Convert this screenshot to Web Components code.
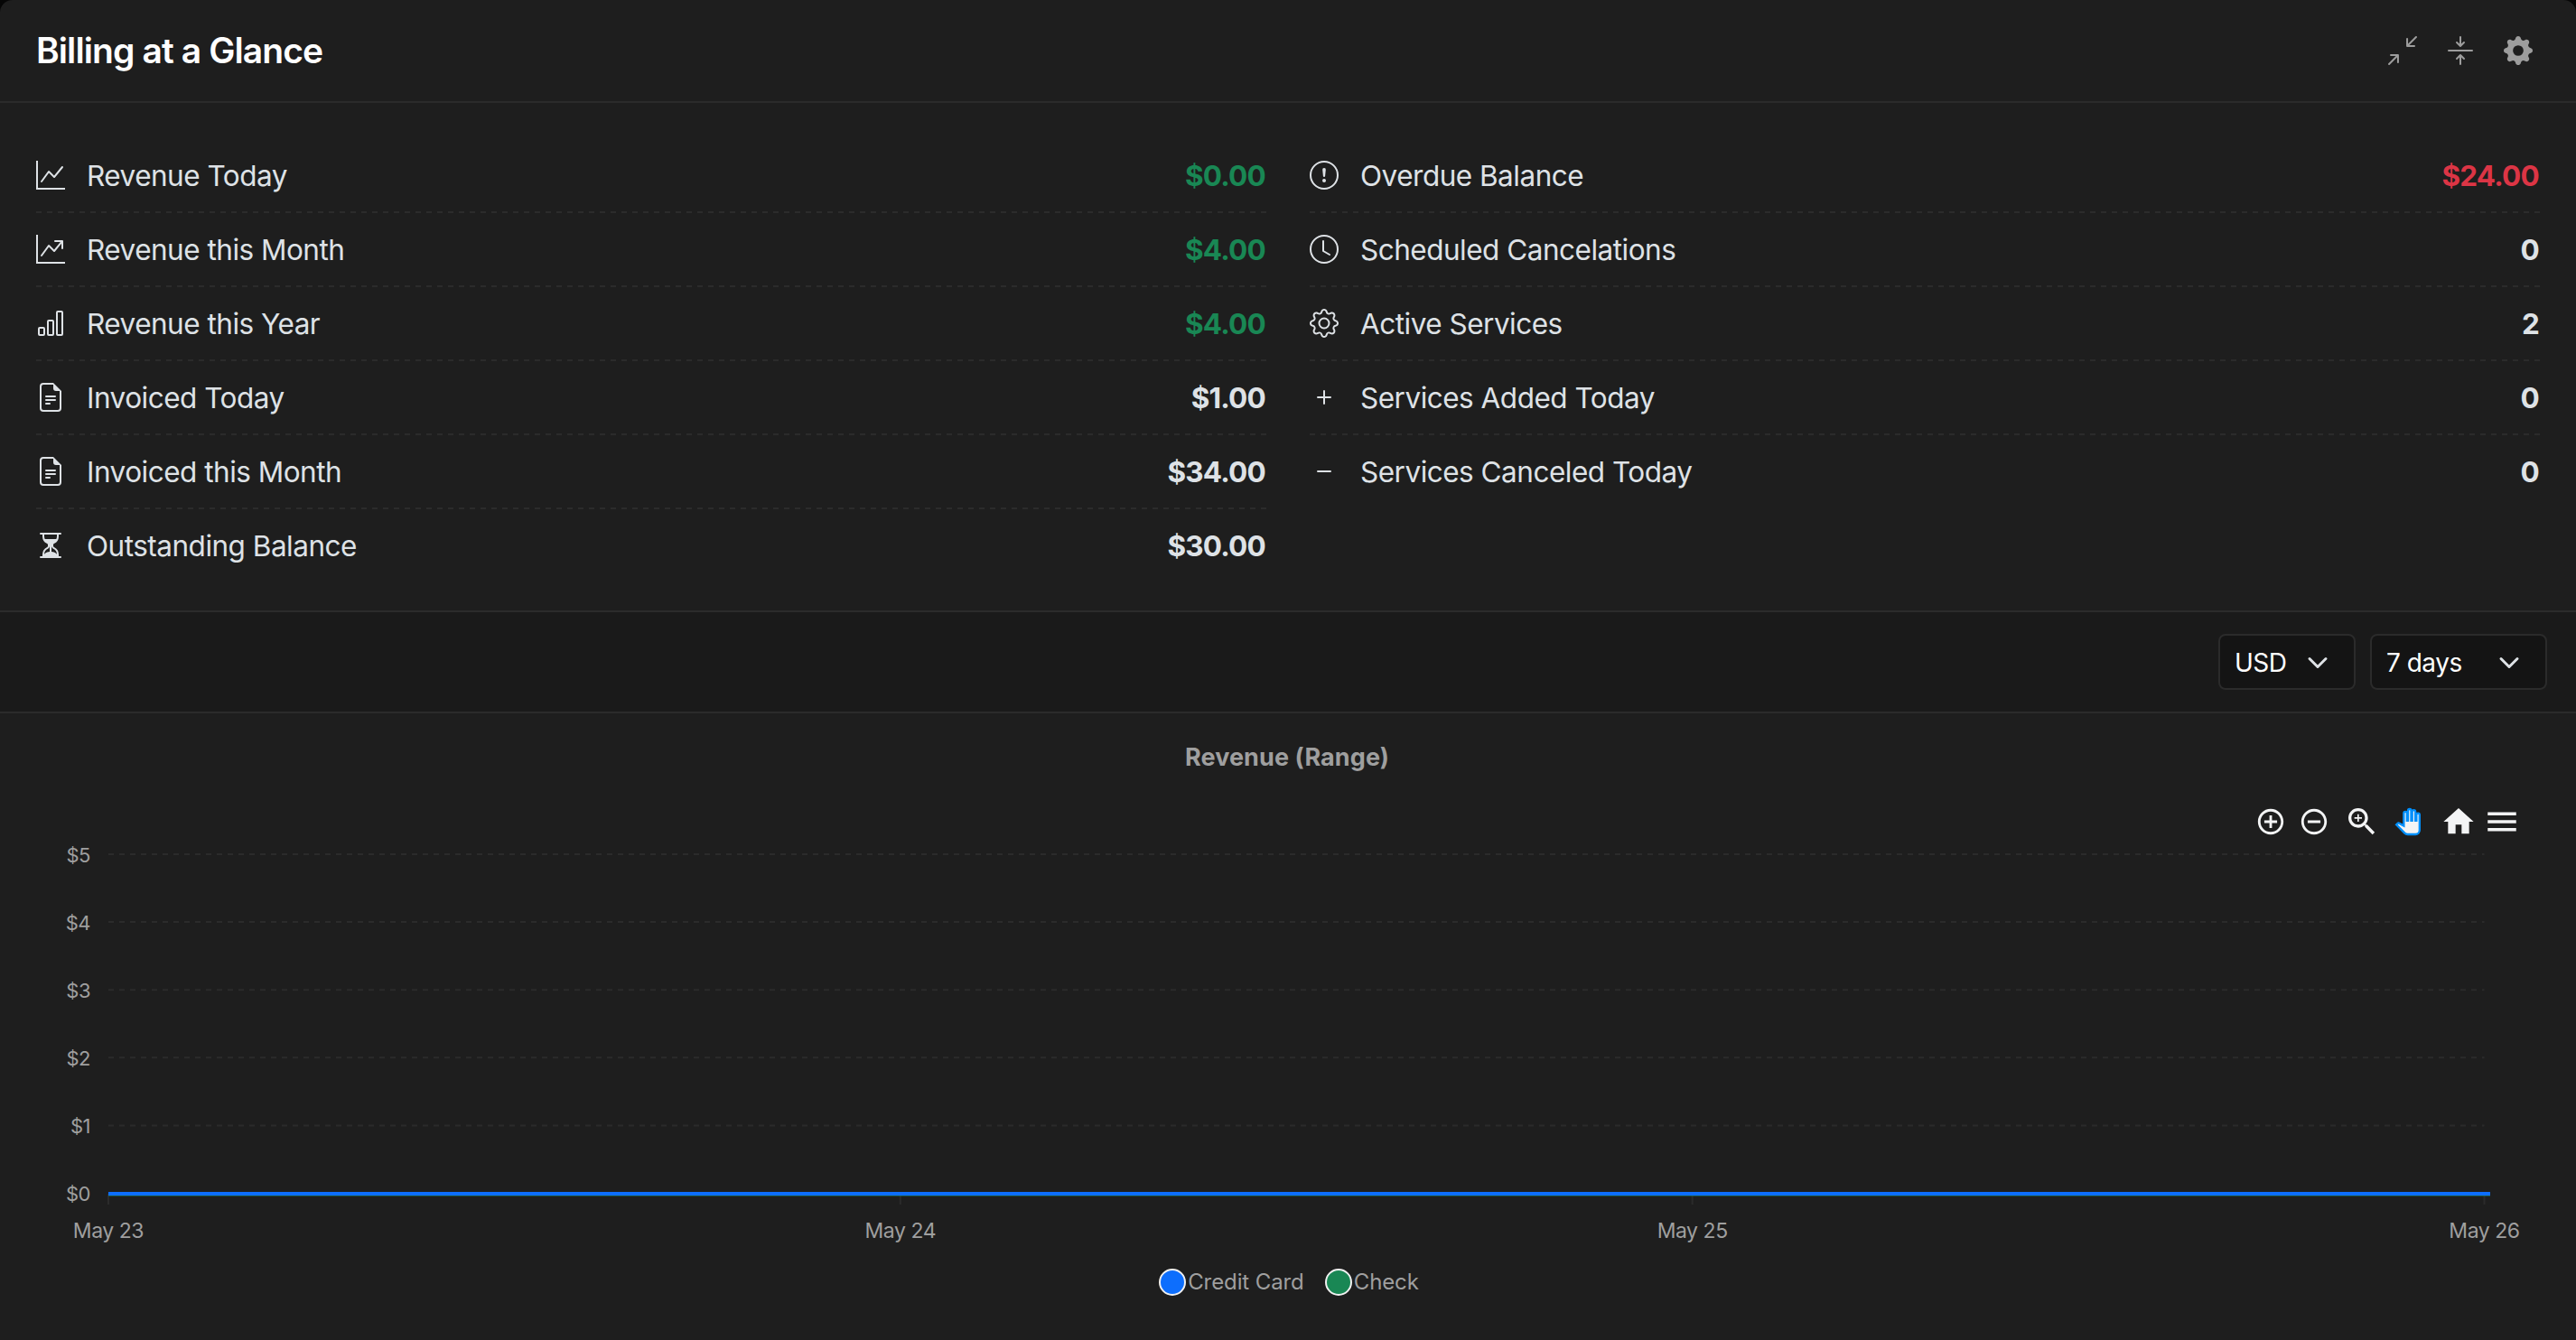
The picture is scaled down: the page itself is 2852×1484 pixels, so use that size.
<!DOCTYPE html>
<html lang="en">
<head>
<meta charset="utf-8">
<title>Billing at a Glance</title>
<style>
  html, body {
    margin: 0;
    background: #060606;
  }
  body {
    font-family: Inter, "Liberation Sans", sans-serif;
    color: #dee2e6;
    width: 2852px;
    height: 1484px;
    overflow: hidden;
  }
</style>
</head>
<body>
<billing-card>
  <card-header slot="header" heading="Billing at a Glance"></card-header>
  <stat-grid slot="stats">
    <stat-list slot="left">
      <stat-row icon="graph-up" tone="success" value="$0.00">Revenue Today</stat-row>
      <stat-row icon="graph-up-arrow" tone="success" value="$4.00">Revenue this Month</stat-row>
      <stat-row icon="bar-chart" tone="success" value="$4.00">Revenue this Year</stat-row>
      <stat-row icon="file-text" value="$1.00">Invoiced Today</stat-row>
      <stat-row icon="file-text" value="$34.00">Invoiced this Month</stat-row>
      <stat-row icon="hourglass" value="$30.00">Outstanding Balance</stat-row>
    </stat-list>
    <stat-list slot="right">
      <stat-row icon="exclamation" tone="danger" value="$24.00">Overdue Balance</stat-row>
      <stat-row icon="clock" value="0">Scheduled Cancelations</stat-row>
      <stat-row icon="gear" value="2">Active Services</stat-row>
      <stat-row icon="plus" value="0">Services Added Today</stat-row>
      <stat-row icon="minus" value="0">Services Canceled Today</stat-row>
    </stat-list>
  </stat-grid>
  <filter-bar slot="filters">
    <select-box style="width: 152px">USD</select-box>
    <select-box style="width: 196px">7 days</select-box>
  </filter-bar>
  <revenue-chart slot="chart" heading="Revenue (Range)"></revenue-chart>
</billing-card>

<script>
const ICONS = {
  'graph-up': '<path fill-rule="evenodd" d="M0 0h1v15h15v1H0zm14.817 3.113a.5.5 0 0 1 .07.704l-4.5 5.5a.5.5 0 0 1-.74.037L7.06 6.767l-3.656 5.027a.5.5 0 0 1-.808-.588l4-5.5a.5.5 0 0 1 .758-.06l2.609 2.61 4.15-5.073a.5.5 0 0 1 .704-.07"/>',
  'graph-up-arrow': '<path fill-rule="evenodd" d="M0 0h1v15h15v1H0zm10 3.5a.5.5 0 0 1 .5-.5h4a.5.5 0 0 1 .5.5v4a.5.5 0 0 1-1 0V4.9l-3.613 4.417a.5.5 0 0 1-.74.037L7.06 6.767l-3.656 5.027a.5.5 0 0 1-.808-.588l4-5.5a.5.5 0 0 1 .758-.06l2.609 2.61L13.445 4H10.5a.5.5 0 0 1-.5-.5"/>',
  'bar-chart': '<path d="M11 2a1 1 0 0 1 1-1h2a1 1 0 0 1 1 1v12a1 1 0 0 1-1 1h-2a1 1 0 0 1-1-1zm1 0v12h2V2zM6 7a1 1 0 0 1 1-1h2a1 1 0 0 1 1 1v7a1 1 0 0 1-1 1H7a1 1 0 0 1-1-1zm1 0v7h2V7zM1 11a1 1 0 0 1 1-1h2a1 1 0 0 1 1 1v3a1 1 0 0 1-1 1H2a1 1 0 0 1-1-1zm1 0v3h2v-3z" fill-rule="evenodd"/>',
  'file-text': '<path d="M5.5 7a.5.5 0 0 0 0 1h5a.5.5 0 0 0 0-1zM5 9.500a.5.5 0 0 1 .5-.5h5a.5.5 0 0 1 0 1h-5a.5.5 0 0 1-.5-.5m0 2a.5.5 0 0 1 .5-.5h2a.5.5 0 0 1 0 1h-2a.5.5 0 0 1-.5-.5"/><path d="M9.500 0H4a2 2 0 0 0-2 2v12a2 2 0 0 0 2 2h8a2 2 0 0 0 2-2V4.500zm0 1v2A1.500 1.500 0 0 0 11 4.500h2V14a1 1 0 0 1-1 1H4a1 1 0 0 1-1-1V2a1 1 0 0 1 1-1z"/>',
  'hourglass': '<path d="M2.500 15a.5.5 0 1 1 0-1h1v-1a4.500 4.500 0 0 1 2.557-4.060c.29-.139.443-.377.443-.59v-.7c0-.213-.154-.451-.443-.59A4.500 4.500 0 0 1 3.500 3V2h-1a.5.5 0 0 1 0-1h11a.5.5 0 0 1 0 1h-1v1a4.500 4.500 0 0 1-2.557 4.060c-.29.139-.443.377-.443.59v.7c0 .213.154.451.443.59A4.500 4.500 0 0 1 12.500 13v1h1a.5.5 0 0 1 0 1zm2-13v1c0 .537.120 1.045.337 1.500h6.326c.216-.455.337-.963.337-1.500V2zm3 6.350c0 .701-.478 1.236-1.011 1.492A3.500 3.500 0 0 0 4.500 13s.866-1.299 3-1.480zm1 0v3.170c2.134.181 3 1.480 3 1.480a3.500 3.500 0 0 0-1.989-3.158C8.978 9.586 8.500 9.052 8.500 8.351z"/>',
  'exclamation': '<path d="M8 15A7 7 0 1 1 8 1a7 7 0 0 1 0 14m0 1A8 8 0 1 0 8 0a8 8 0 0 0 0 16"/><path d="M7.002 11a1 1 0 1 1 2 0 1 1 0 0 1-2 0M7.100 4.995a.905.905 0 1 1 1.800 0l-.35 3.507a.552.552 0 0 1-1.100 0z"/>',
  'clock': '<path d="M8 3.500a.5.5 0 0 0-1 0V9a.5.5 0 0 0 .252.434l3.500 2a.5.5 0 0 0 .496-.868L8 8.710z"/><path d="M8 16A8 8 0 1 0 8 0a8 8 0 0 0 0 16m7-8A7 7 0 1 1 1 8a7 7 0 0 1 14 0"/>',
  'gear': '<path d="M8 4.754a3.246 3.246 0 1 0 0 6.492 3.246 3.246 0 0 0 0-6.492M5.754 8a2.246 2.246 0 1 1 4.492 0 2.246 2.246 0 0 1-4.492 0"/><path d="M9.796 1.343c-.527-1.790-3.065-1.790-3.592 0l-.094.319a.873.873 0 0 1-1.255.520l-.292-.160c-1.640-.892-3.433.902-2.540 2.541l.159.292a.873.873 0 0 1-.520 1.255l-.319.094c-1.790.527-1.790 3.065 0 3.592l.319.094a.873.873 0 0 1 .520 1.255l-.160.292c-.892 1.640.901 3.434 2.541 2.540l.292-.159a.873.873 0 0 1 1.255.520l.094.319c.527 1.790 3.065 1.790 3.592 0l.094-.319a.873.873 0 0 1 1.255-.520l.292.160c1.640.893 3.434-.902 2.540-2.541l-.159-.292a.873.873 0 0 1 .520-1.255l.319-.094c1.790-.527 1.790-3.065 0-3.592l-.319-.094a.873.873 0 0 1-.520-1.255l.160-.292c.893-1.640-.902-3.433-2.541-2.540l-.292.159a.873.873 0 0 1-1.255-.520zm-2.633.283c.246-.835 1.428-.835 1.674 0l.094.319a1.873 1.873 0 0 0 2.693 1.115l.291-.160c.764-.415 1.600.420 1.184 1.185l-.159.292a1.873 1.873 0 0 0 1.116 2.692l.318.094c.835.246.835 1.428 0 1.674l-.319.094a1.873 1.873 0 0 0-1.115 2.693l.160.291c.415.764-.420 1.600-1.185 1.184l-.291-.159a1.873 1.873 0 0 0-2.693 1.116l-.094.318c-.246.835-1.428.835-1.674 0l-.094-.319a1.873 1.873 0 0 0-2.692-1.115l-.292.160c-.764.415-1.600-.420-1.184-1.185l.159-.291A1.873 1.873 0 0 0 1.945 8.930l-.319-.094c-.835-.246-.835-1.428 0-1.674l.319-.094A1.873 1.873 0 0 0 3.060 4.377l-.160-.292c-.415-.764.420-1.600 1.185-1.184l.292.159a1.873 1.873 0 0 0 2.692-1.115z"/>',
  'plus': '<path d="M8 4a.5.5 0 0 1 .5.5v3h3a.5.5 0 0 1 0 1h-3v3a.5.5 0 0 1-1 0v-3h-3a.5.5 0 0 1 0-1h3v-3A.5.5 0 0 1 8 4"/>',
  'minus': '<path d="M4 8a.5.5 0 0 1 .5-.5h7a.5.5 0 0 1 0 1h-7A.5.5 0 0 1 4 8"/>',
  'contract': '<path fill-rule="evenodd" d="M.172 15.828a.5.5 0 0 0 .707 0l4.096-4.096V14.500a.5.5 0 1 0 1 0v-3.975a.5.5 0 0 0-.5-.5H1.500a.5.5 0 0 0 0 1h2.768L.172 15.121a.5.5 0 0 0 0 .707M15.828.172a.5.5 0 0 0-.707 0l-4.096 4.096V1.500a.5.5 0 1 0-1 0v3.975a.5.5 0 0 0 .5.5H14.500a.5.5 0 0 0 0-1h-2.768L15.828.879a.5.5 0 0 0 0-.707"/>',
  'collapse': '<path fill-rule="evenodd" d="M1 8a.5.5 0 0 1 .5-.5h13a.5.5 0 0 1 0 1h-13A.5.5 0 0 1 1 8m7-8a.5.5 0 0 1 .5.5v3.793l1.146-1.147a.5.5 0 0 1 .708.708l-2 2a.5.5 0 0 1-.708 0l-2-2a.5.5 0 1 1 .708-.708L7.500 4.293V.5A.5.5 0 0 1 8 0m-.5 11.707-1.146 1.147a.5.5 0 0 1-.708-.708l2-2a.5.5 0 0 1 .708 0l2 2a.5.5 0 0 1-.708.708L8.500 11.707V15.500a.5.5 0 0 1-1 0z"/>',
  'gear-fill': '<path d="M9.405 1.050c-.413-1.400-2.397-1.400-2.810 0l-.1.340a1.464 1.464 0 0 1-2.105.872l-.310-.170c-1.283-.698-2.686.705-1.987 1.987l.169.311c.446.820.023 1.841-.872 2.105l-.340.100c-1.400.413-1.400 2.397 0 2.810l.340.100a1.464 1.464 0 0 1 .872 2.105l-.170.310c-.698 1.283.705 2.686 1.987 1.987l.311-.169a1.464 1.464 0 0 1 2.105.872l.100.340c.413 1.400 2.397 1.400 2.810 0l.100-.340a1.464 1.464 0 0 1 2.105-.872l.310.170c1.283.698 2.686-.705 1.987-1.987l-.169-.311a1.464 1.464 0 0 1 .872-2.105l.340-.100c1.400-.413 1.400-2.397 0-2.810l-.340-.100a1.464 1.464 0 0 1-.872-2.105l.170-.310c.698-1.283-.705-2.686-1.987-1.987l-.311.169a1.464 1.464 0 0 1-2.105-.872zM8 10.930a2.929 2.929 0 1 1 0-5.860 2.929 2.929 0 0 1 0 5.858z"/>'
};

function icon(name) {
  return `<svg width="32" height="32" viewBox="0 0 16 16" fill="currentColor">${ICONS[name]}</svg>`;
}

class BillingCard extends HTMLElement {
  constructor() {
    super();
    this.attachShadow({ mode: 'open' });
    this.shadowRoot.innerHTML = `
      <style>
        :host {
          display: flex;
          flex-direction: column;
          box-sizing: border-box;
          height: 1484px;
          background: #1e1e1e;
          border-radius: 14px 14px 0 0;
          overflow: hidden;
        }
      </style>
      <slot name="header"></slot>
      <slot name="stats"></slot>
      <slot name="filters"></slot>
      <slot name="chart"></slot>
    `;
  }
}

class CardHeader extends HTMLElement {
  constructor() {
    super();
    this.attachShadow({ mode: 'open' });
    this.shadowRoot.innerHTML = `
      <style>
        :host {
          display: flex;
          align-items: center;
          justify-content: space-between;
          box-sizing: border-box;
          height: 114px;
          padding: 0 48px 0 40px;
          border-bottom: 2px solid #2b2b2b;
        }
        h2 {
          margin: 0;
          padding-bottom: 2px;
          color: #fff;
          font-size: 39px;
          font-weight: 600;
          letter-spacing: -0.9px;
        }
        nav {
          display: flex;
          gap: 32px;
          color: #9d9d9d;
        }
        svg { display: block; }
      </style>
      <h2>${this.getAttribute('heading')}</h2>
      <nav>${icon('contract')}${icon('collapse')}${icon('gear-fill')}</nav>
    `;
  }
}

class StatGrid extends HTMLElement {
  constructor() {
    super();
    this.attachShadow({ mode: 'open' });
    this.shadowRoot.innerHTML = `
      <style>
        :host {
          display: grid;
          grid-template-columns: 1fr 1fr;
          column-gap: 48px;
          box-sizing: border-box;
          height: 564px;
          padding: 40px 40px 0;
          border-bottom: 2px solid #2b2b2b;
        }
      </style>
      <slot name="left"></slot>
      <slot name="right"></slot>
    `;
  }
}

class StatList extends HTMLElement {
  constructor() {
    super();
    this.attachShadow({ mode: 'open' });
    this.shadowRoot.innerHTML = `
      <style>
        :host { display: block; }
        ::slotted(:last-child) { --rule: none; }
      </style>
      <slot></slot>
    `;
  }
}

class StatRow extends HTMLElement {
  constructor() {
    super();
    this.attachShadow({ mode: 'open' });
    this.shadowRoot.innerHTML = `
      <style>
        :host {
          display: flex;
          align-items: center;
          box-sizing: border-box;
          height: 82px;
          padding-bottom: 2px;
          font-size: 31.5px;
          background: var(--rule, repeating-linear-gradient(90deg, #2b2b2b 0 6px, transparent 6px 12px)) left bottom / 100% 2px no-repeat;
        }
        svg {
          display: block;
          margin-right: 24px;
        }
        .label {
          flex: 1;
          font-weight: 430;
          letter-spacing: -0.5px;
        }
        .value {
          margin-right: 1px;
          font-weight: 700;
          letter-spacing: -0.8px;
        }
        :host([tone="success"]) .value { color: #198754; }
        :host([tone="danger"]) .value { color: #dc3545; }
      </style>
      ${icon(this.getAttribute('icon'))}
      <span class="label"><slot></slot></span>
      <span class="value">${this.getAttribute('value')}</span>
    `;
  }
}

class FilterBar extends HTMLElement {
  constructor() {
    super();
    this.attachShadow({ mode: 'open' });
    this.shadowRoot.innerHTML = `
      <style>
        :host {
          display: flex;
          align-items: center;
          justify-content: flex-end;
          gap: 16px;
          box-sizing: border-box;
          height: 112px;
          padding: 0 32px;
          background: #1a1a1a;
          border-bottom: 2px solid #2b2b2b;
        }
      </style>
      <slot></slot>
    `;
  }
}

class SelectBox extends HTMLElement {
  constructor() {
    super();
    this.attachShadow({ mode: 'open' });
    this.shadowRoot.innerHTML = `
      <style>
        :host {
          display: flex;
          align-items: center;
          justify-content: space-between;
          box-sizing: border-box;
          height: 62px;
          padding: 1px 28px 0 16px;
          background: #141414;
          border: 2px solid #2b2b2b;
          border-radius: 8px;
          color: #fff;
          font-size: 28px;
          letter-spacing: -0.5px;
        }
      </style>
      <slot></slot>
      <svg width="24" height="24" viewBox="0 0 16 16" fill="none" stroke="#dee2e6" stroke-width="2" stroke-linecap="round" stroke-linejoin="round"><path d="m2 5 6 6 6-6"/></svg>
    `;
  }
}

class RevenueChart extends HTMLElement {
  constructor() {
    super();
    this.attachShadow({ mode: 'open' });
    const left = 120, right = 2750.5, step = 75.1;
    let plot = '';
    for (let i = 0; i <= 5; i++) {
      const y = 16 + i * step;
      plot += `<line class="grid" x1="${left}" x2="${right}" y1="${y}" y2="${y}"/>`;
      plot += `<text class="y" x="100" y="${y + 8.5}" text-anchor="end">$${5 - i}</text>`;
    }
    ['May 23', 'May 24', 'May 25', 'May 26'].forEach((day, i) => {
      const x = left + i * (right - left) / 3;
      plot += `<line class="tick" x1="${x}" x2="${x}" y1="392" y2="404"/>`;
      plot += `<text class="x" x="${x}" y="440.500" text-anchor="middle">${day}</text>`;
    });

    this.shadowRoot.innerHTML = `
      <style>
        :host {
          display: flex;
          flex-direction: column;
          color: #9f9f9f;
        }
        h3 {
          margin: 31px 2px 0 0;
          height: 36px;
          line-height: 36px;
          text-align: center;
          font-size: 27px;
          font-weight: 700;
          letter-spacing: 0.1px;
        }
        .tools {
          display: flex;
          justify-content: flex-end;
          align-items: center;
          height: 40px;
          margin-top: 33px;
          padding-right: 61px;
          fill: #f3f4f5;
        }
        .tools svg { display: block; }
        .plot {
          display: block;
          font-family: inherit;
        }
        .grid { stroke: #2b2b2b; stroke-width: 2; stroke-dasharray: 6; }
        .tick { stroke: #2b2b2b; stroke-width: 2; }
        text { fill: #9f9f9f; }
        .y { font-size: 22px; letter-spacing: -0.5px; }
        .x { font-size: 23px; letter-spacing: -0.45px; }
        .legend {
          display: flex;
          justify-content: center;
          gap: 23px;
          margin-top: 25px;
          padding-left: 2px;
          font-size: 24px;
          line-height: 30px;
          letter-spacing: -0.1px;
        }
        .item {
          display: flex;
          align-items: center;
          gap: 2px;
        }
        .dot {
          box-sizing: border-box;
          width: 30px;
          height: 30px;
          border: 2px solid #f0f0f0;
          border-radius: 50%;
        }
      </style>
      <h3>${this.getAttribute('heading')}</h3>
      <div class="tools">
        <svg width="34" height="34" viewBox="0 0 24 24"><path d="M13 7h-2v4H7v2h4v4h2v-4h4v-2h-4V7zm-1-5C6.480 2 2 6.480 2 12s4.480 10 10 10 10-4.480 10-10S17.520 2 12 2zm0 18c-4.410 0-8-3.590-8-8s3.590-8 8-8 8 3.590 8 8-3.590 8-8 8z"/></svg>
        <svg width="34" height="34" viewBox="0 0 24 24" style="margin-left: 14px"><path d="M7 11v2h10v-2H7zm5-9C6.480 2 2 6.480 2 12s4.480 10 10 10 10-4.480 10-10S17.520 2 12 2zm0 18c-4.410 0-8-3.590-8-8s3.590-8 8-8 8 3.590 8 8-3.590 8-8 8z"/></svg>
        <svg width="40" height="40" viewBox="0 0 24 24" style="margin-left: 16px"><path d="M15.500 14h-.79l-.28-.27C15.410 12.590 16 11.110 16 9.500 16 5.910 13.090 3 9.500 3S3 5.910 3 9.500 5.910 16 9.500 16c1.610 0 3.090-.59 4.230-1.570l.27.28v.79l5 4.990L20.490 19l-4.990-5zm-6 0C7.010 14 5 11.990 5 9.500S7.010 5 9.500 5 14 7.010 14 9.500 11.990 14 9.500 14z"/><path d="M12 10h-2v2H9v-2H7V9h2V7h1v2h2v1z"/></svg>
        <svg width="28" height="28" viewBox="0 0 24 24" style="margin-left: 17px; overflow: visible" stroke="#008ffb" stroke-width="2" fill="#f3f4f5"><path d="M23 5.500V20c0 2.200-1.800 4-4 4h-7.300c-1.080 0-2.100-.43-2.850-1.190L1 14.830s1.260-1.230 1.300-1.250c.22-.19.49-.29.79-.29.22 0 .42.060.6.160.040.010 4.310 2.460 4.310 2.460V4c0-.83.67-1.500 1.500-1.500S11 3.170 11 4v7h1V1.500c0-.83.67-1.500 1.500-1.500S15 .67 15 1.500V11h1V2.500c0-.83.67-1.500 1.500-1.500s1.500.67 1.500 1.500V11h1V5.500c0-.83.67-1.500 1.500-1.500s1.500.67 1.500 1.500z"/></svg>
        <svg width="40" height="40" viewBox="0 0 24 24" style="margin-left: 22px"><path d="M10 20v-6h4v6h5v-8h3L12 3 2 12h3v8z"/></svg>
        <svg width="42" height="42" viewBox="0 0 24 24" style="margin-left: 7px"><path d="M3 18h18v-2H3v2zm0-5h18v-2H3v2zm0-7v2h18V6H3z"/></svg>
      </div>
      <svg class="plot" width="2852" height="450" viewBox="0 0 2852 450">
        ${plot}
        <line x1="${left}" x2="2757" y1="393" y2="393" stroke="#198754" stroke-opacity=".5" stroke-width="4"/>
        <line x1="${left}" x2="2757" y1="392" y2="392" stroke="#0d6efd" stroke-width="4"/>
      </svg>
      <div class="legend">
        <span class="item"><i class="dot" style="background: #0d6efd"></i><span>Credit Card</span></span>
        <span class="item"><i class="dot" style="background: #198754"></i><span>Check</span></span>
      </div>
    `;
  }
}

customElements.define('billing-card', BillingCard);
customElements.define('card-header', CardHeader);
customElements.define('stat-grid', StatGrid);
customElements.define('stat-list', StatList);
customElements.define('stat-row', StatRow);
customElements.define('filter-bar', FilterBar);
customElements.define('select-box', SelectBox);
customElements.define('revenue-chart', RevenueChart);
</script>
</body>
</html>
